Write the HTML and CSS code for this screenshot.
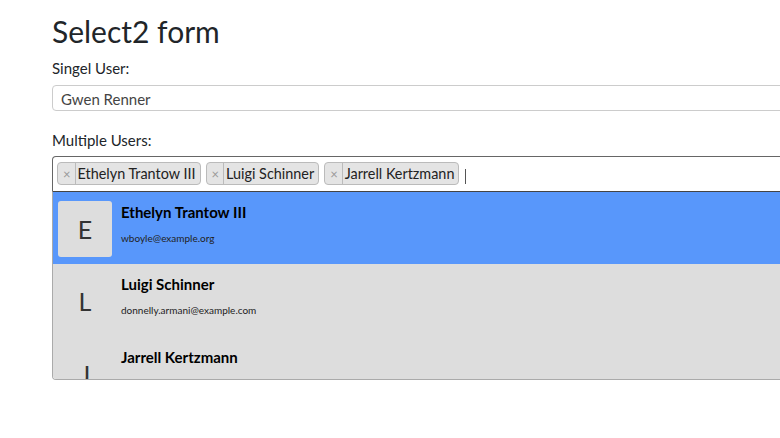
FILE: index.html
```html
<!DOCTYPE html>
<html lang="en">
<head>
    <meta charset="UTF-8">
    <meta name="viewport" content="width=device-width, initial-scale=1.0">
    <title>Select2 form</title>
    <link rel="stylesheet" href="styles.css">
</head>
<body>
    <div class="container">
        <h2 class="title">Select2 form</h2>
        <div class="form-group">
            <label class="label">Singel User:</label>
            <div class="single-select">
                <span class="single-value">Gwen Renner</span>
            </div>
        </div>
        <div class="form-group">
            <label class="label">Multiple Users:</label>
            <div class="multi-select">
                <ul class="choices">
                    <li class="choice"><span class="choice-remove">×</span><span class="choice-text">Ethelyn Trantow III</span></li>
                    <li class="choice"><span class="choice-remove">×</span><span class="choice-text">Luigi Schinner</span></li>
                    <li class="choice"><span class="choice-remove">×</span><span class="choice-text">Jarrell Kertzmann</span></li>
                    <li class="search"><span class="caret"></span></li>
                </ul>
            </div>
            <div class="dropdown">
                <ul class="results">
                    <li class="option highlighted">
                        <div class="avatar">E</div>
                        <div class="info">
                            <div class="name">Ethelyn Trantow III</div>
                            <div class="email">wboyle@example.org</div>
                        </div>
                    </li>
                    <li class="option">
                        <div class="avatar">L</div>
                        <div class="info">
                            <div class="name">Luigi Schinner</div>
                            <div class="email">donnelly.armani@example.com</div>
                        </div>
                    </li>
                    <li class="option">
                        <div class="avatar">J</div>
                        <div class="info">
                            <div class="name">Jarrell Kertzmann</div>
                            <div class="email">jarrell.k@example.net</div>
                        </div>
                    </li>
                </ul>
            </div>
        </div>
    </div>
</body>
</html>
```

FILE: styles.css
```css
body {
    margin: 0;
    font-family: Lato, "Open Sans", Arial, sans-serif;
    color: #212529;
    background: #fff;
    overflow: hidden;
}
.container {
    width: 1000px;
    padding: 13px 0 0 52px;
}
.title {
    font-size: 30px;
    font-weight: 400;
    line-height: 1.2;
    margin: 0 0 9px;
}
.form-group { margin-bottom: 19px; }
.label {
    display: block;
    font-size: 15px;
    line-height: 20px;
    margin-bottom: 7px;
}
.form-group:last-child .label { margin-bottom: 6px; }
.single-select {
    border: 1px solid #ccc;
    border-radius: 4px;
    padding: 2px 0 0 8px;
    box-sizing: border-box;
    height: 26px;
    display: flex;
    align-items: center;
}
.single-value { font-size: 15px; color: #444; }
.multi-select {
    border: 1px solid #666;
    border-bottom: none;
    border-radius: 4px 4px 0 0;
    height: 34px;
}
.choices {
    list-style: none;
    margin: 0;
    padding: 5px 4px 0;
    display: flex;
    gap: 5px;
    align-items: center;
}
.choice {
    display: flex;
    align-items: center;
    height: 21px;
    background: #e4e4e4;
    border: 1px solid #bbb;
    border-radius: 4px;
    font-size: 14.4px;
    color: #222;
}
.choice-remove {
    color: #999;
    font-size: 13px;
    padding: 0 4px 0 5px;
    align-self: stretch;
    display: flex;
    align-items: center;
    border-right: 1px solid #bbb;
}
.choice-text { padding: 0 4px 0 2px; }
.caret {
    display: block;
    width: 1px;
    height: 15px;
    margin: 6px 0 0 1px;
    background: #555;
}
.dropdown {
    border: 1px solid #aaa;
    border-top: 1px solid #444;
    border-radius: 0 0 4px 4px;
    height: 187px;
    overflow: hidden;
}
.results { list-style: none; margin: 0; padding: 0; }
.option {
    display: flex;
    align-items: flex-start;
    gap: 9px;
    height: 72px;
    padding: 9px 5px 0;
    box-sizing: border-box;
    background: #ddd;
}
.option + .option { height: 73px; }
.option.highlighted { background: #5897fb; }
.avatar {
    width: 54px;
    height: 56px;
    border-radius: 3px;
    background: #ddd;
    display: flex;
    align-items: center;
    justify-content: center;
    font-size: 25px;
    color: #333;
}
.info { padding-top: 1px; }
.name { font-size: 15px; line-height: 20px; font-weight: 700; color: #000; }
.email { font-size: 10px; color: #222; margin-top: 10px; }
```
